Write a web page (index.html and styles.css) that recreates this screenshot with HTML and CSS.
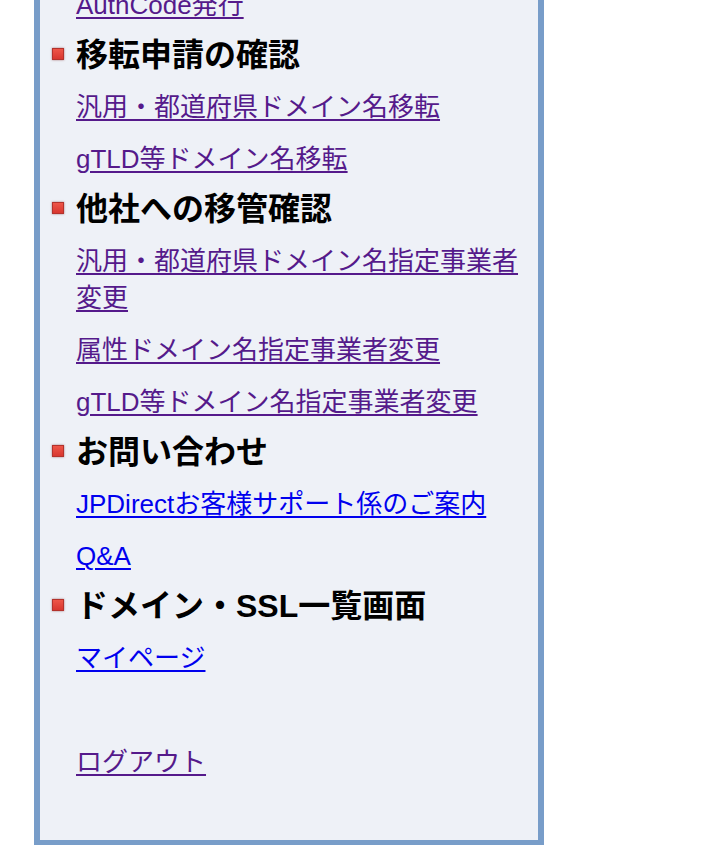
FILE: index.html
```html
<!DOCTYPE html>
<html lang="ja">
<head>
<meta charset="UTF-8">
<meta name="viewport" content="width=device-width, initial-scale=1.0">
<title>メニュー</title>
<link rel="stylesheet" href="styles.css">
</head>
<body>
<div class="panel">
<ul class="menu">
<li class="item"><a class="seen" href="#">AuthCode発行</a></li>

<li class="head">移転申請の確認</li>
<li class="item"><a class="seen" href="#">汎用・都道府県ドメイン名移転</a></li>
<li class="item"><a class="seen" href="#">gTLD等ドメイン名移転</a></li>

<li class="head">他社への移管確認</li>
<li class="item"><a class="seen" href="#">汎用・都道府県ドメイン名指定事業者変更</a></li>
<li class="item"><a class="seen" href="#">属性ドメイン名指定事業者変更</a></li>
<li class="item"><a class="seen" href="#">gTLD等ドメイン名指定事業者変更</a></li>

<li class="head">お問い合わせ</li>
<li class="item"><a href="#">JPDirectお客様サポート係のご案内</a></li>
<li class="item"><a href="#">Q&amp;A</a></li>

<li class="head">ドメイン・SSL一覧画面</li>
<li class="item"><a href="#">マイページ</a></li>
<li class="item spacer"></li>
<li class="item"><a class="seen" href="#">ログアウト</a></li>
</ul>
</div>
</body>
</html>
```

FILE: styles.css
```css
body {
margin: 0;
padding: 0;
background: #fff;
font-family: "Liberation Sans", "Noto Sans CJK JP", sans-serif;
color: #000;
}
.panel {
width: 498px;
margin: -27px 0 0 34px;
background: #eef1f7;
border: 6px solid #789dc9;
border-bottom-width: 5px;
padding-bottom: 52px;
}
.menu {
list-style: none;
margin: 0;
padding: 0 0 0 36px;
}
.item {
font-size: 26px;
line-height: 37px;
padding: 7.5px 0;
}
.spacer {
height: 37px;
}
.item a {
color: #0000ee;
text-decoration-thickness: 2px;
text-underline-offset: 3px;
}
.item a.seen {
color: #551a8b;
}
.head {
font-size: 32px;
font-weight: bold;
line-height: 37px;
padding: 6px 0 7px;
margin-left: -24px;
}
.head::before {
content: "";
display: inline-block;
width: 10px;
height: 10px;
margin-right: 12px;
vertical-align: 6px;
background: linear-gradient(#ee5548, #d8362f);
border: 1px solid #b3322c;
box-shadow: 0 0 2px rgba(120, 40, 40, 0.6);
}
```
